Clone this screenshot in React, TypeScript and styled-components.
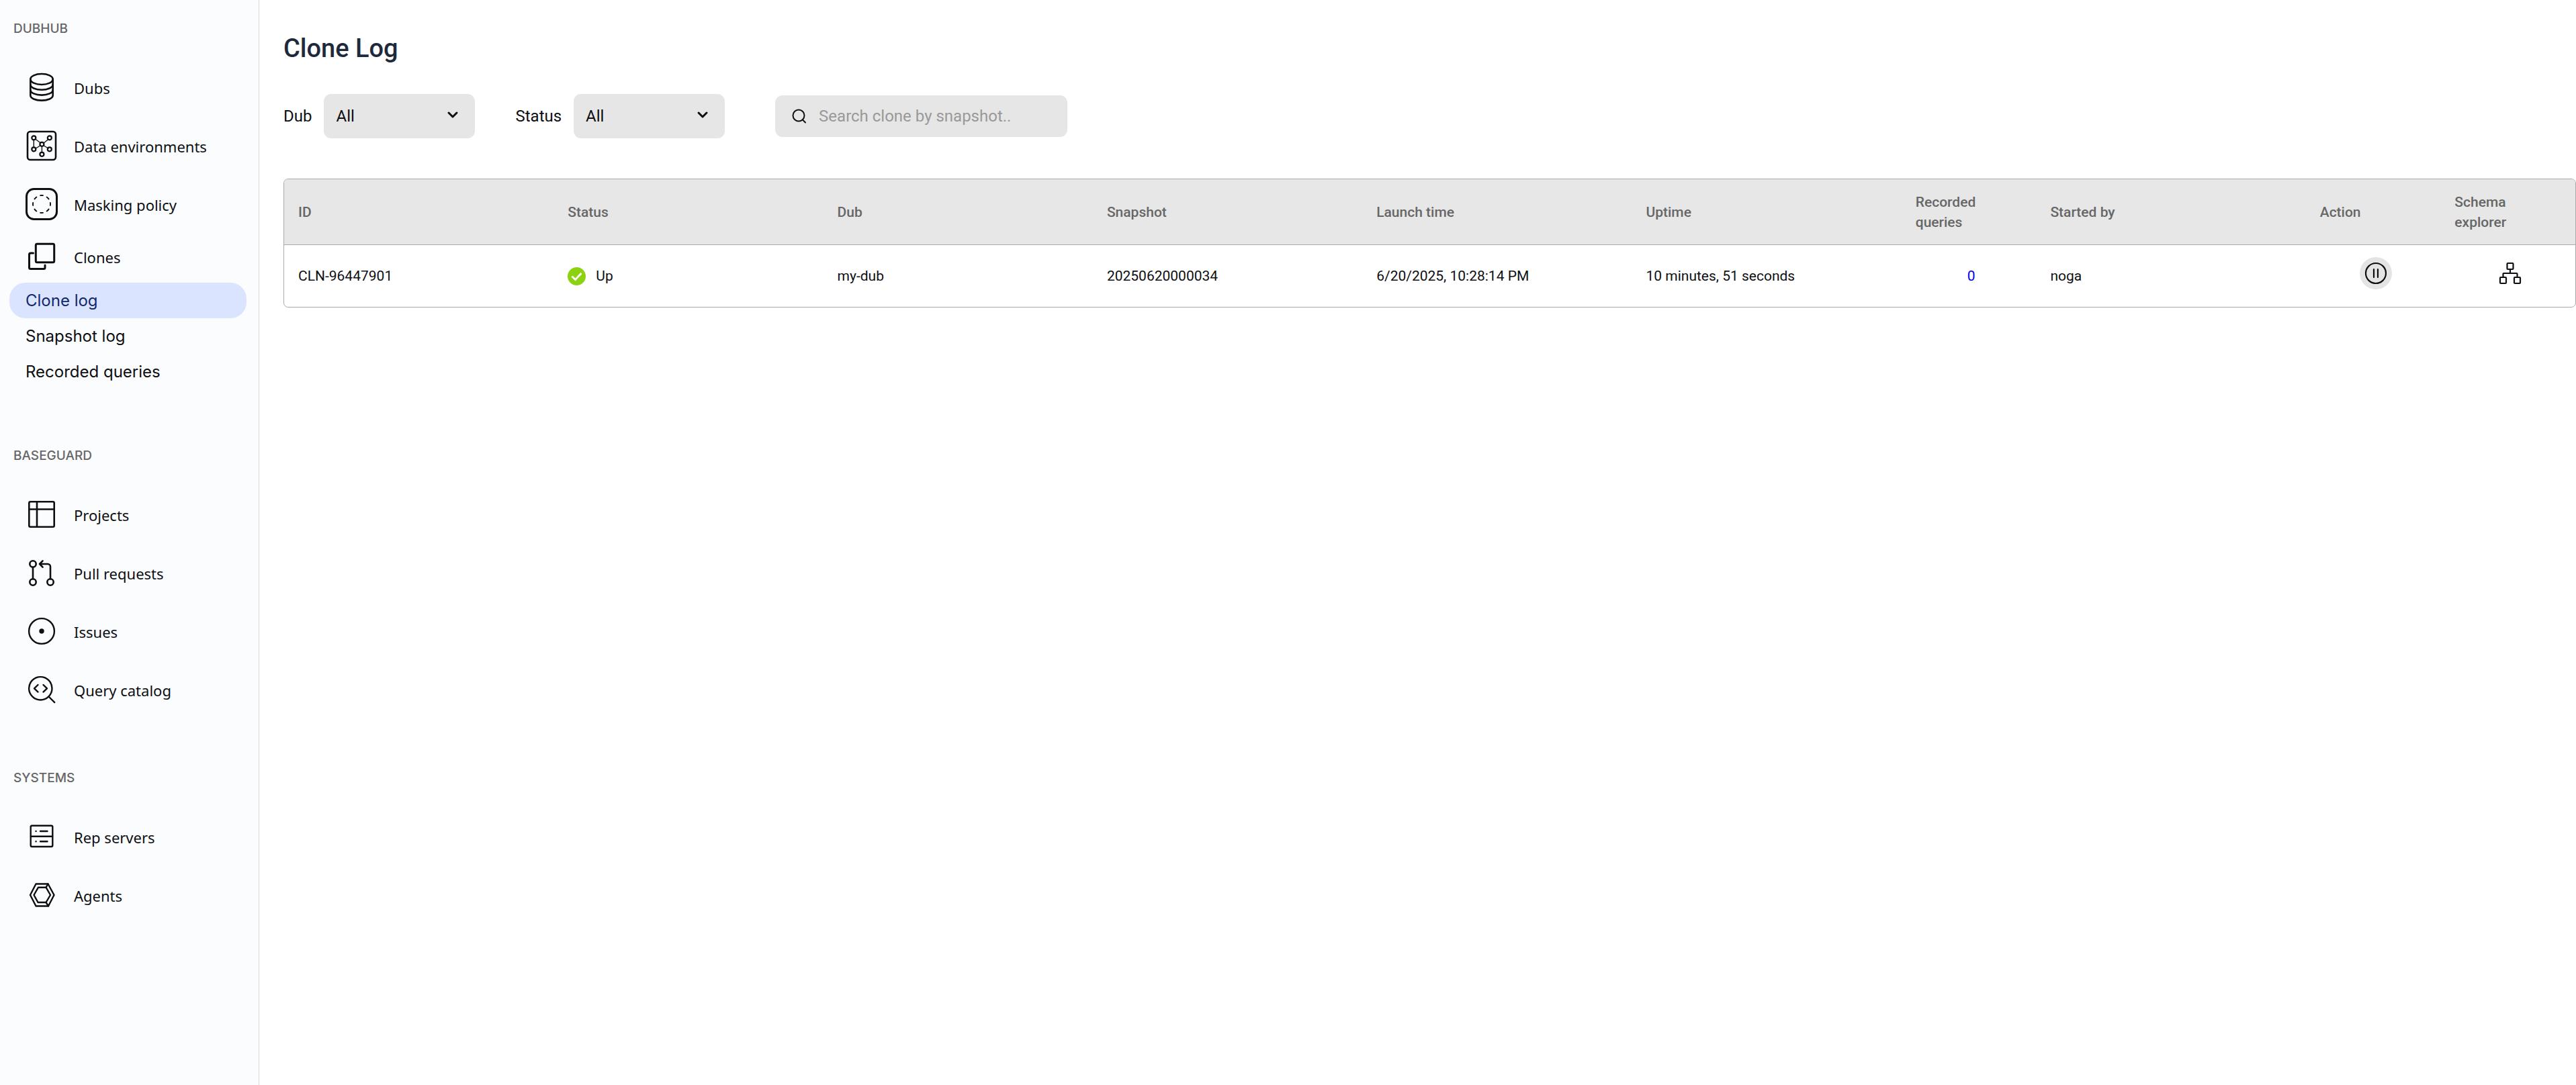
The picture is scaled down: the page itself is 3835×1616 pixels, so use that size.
import React from 'react';
import styled, { createGlobalStyle, css } from 'styled-components';

const GlobalStyle = createGlobalStyle`
  *, *::before, *::after { box-sizing: border-box; }
  body {
    margin: 0;
    background: #fff;
    color: #0d0f12;
    font-family: Roboto, "Liberation Sans", sans-serif;
    font-size: 24px;
  }
  a { color: inherit; text-decoration: none; }
`;

const Shell = styled.div`
  display: flex;
  min-height: 100vh;
`;

const Sidebar = styled.nav`
  flex: 0 0 386px;
  padding: 0 18px 0 14px;
  background: #fbfcfe;
  border-right: 1px solid #d6d7da;
`;

const Section = styled.section`
  padding-bottom: 46px;
`;

const SectionTitle = styled.h2`
  margin: 0;
  padding: 0 6px;
  font: 500 19px/86px Inter, sans-serif;
  color: #666;
`;

const List = styled.ul`
  margin: 0;
  padding: 0;
  list-style: none;
`;

const SubList = styled(List)`
  padding: 5px 0 10px;
`;

const NavLink = styled.a<{ $short?: boolean }>`
  display: flex;
  align-items: center;
  gap: 24px;
  height: ${p => (p.$short ? 69 : 87)}px;
  padding-left: 24px;
  font-family: "Noto Sans", sans-serif;
  font-size: 22px;
  svg { flex: none; }
`;

const NavLabel = styled.span`
  padding-top: 3px;
`;

const SubLink = styled.a<{ $active?: boolean }>`
  display: block;
  padding: 0 24px;
  border-radius: 24px;
  font: 400 24px/53px Inter, sans-serif;
  ${p => p.$active && css`
    background: #dbe4ff;
    color: #12296b;
  `}
`;

const Main = styled.main`
  flex: 1;
  min-width: 0;
  padding: 46px 0 0 36px;
`;

const Title = styled.h1`
  margin: 0;
  font-size: 38px;
  line-height: 52px;
  font-weight: 500;
  color: #1e293b;
`;

const Filters = styled.div`
  display: flex;
  align-items: center;
  gap: 60px;
  margin: 42px 0 60px;
`;

const Field = styled.label`
  display: flex;
  align-items: center;
  gap: 18px;
`;

const SelectBox = styled.span`
  display: grid;
  align-items: center;
  width: 225px;
  svg { grid-area: 1 / 1; justify-self: end; margin-right: 23px; pointer-events: none; }
`;

const Select = styled.select`
  grid-area: 1 / 1;
  appearance: none;
  width: 100%;
  height: 66px;
  padding: 0 18px;
  border: 0;
  border-radius: 11px;
  background: #e6e6e6;
  color: inherit;
  font: inherit;
`;

const SearchBox = styled.label`
  display: flex;
  align-items: center;
  gap: 18px;
  width: 435px;
  height: 62px;
  margin-left: 15px;
  padding: 0 25px;
  border-radius: 11px;
  background: #e6e6e6;
`;

const SearchInput = styled.input`
  flex: 1;
  min-width: 0;
  padding: 0;
  border: 0;
  outline: 0;
  background: none;
  color: inherit;
  font: inherit;
  &::placeholder { color: #999; opacity: 1; }
`;

const Table = styled.table`
  display: block;
  border: 1px solid #a9a9a9;
  border-radius: 7px;
  overflow: hidden;
  font-size: 21px;
  line-height: 30px;
  thead, tbody { display: block; }
`;

const Row = styled.tr<{ $head?: boolean }>`
  display: grid;
  grid-template-columns: repeat(6, 2fr) 1fr 2fr 1fr 1fr;
  align-items: center;
  height: ${p => (p.$head ? 98 : 92)}px;
  ${p => p.$head && css`
    background: #e7e7e7;
    border-bottom: 1px solid #a9a9a9;
  `}
`;

const HeadCell = styled.th`
  padding: 0 36px 0 21px;
  text-align: left;
  font-weight: 500;
  color: #666;
`;

const Cell = styled.td<{ $center?: boolean }>`
  display: flex;
  align-items: center;
  gap: 15px;
  justify-content: ${p => (p.$center ? 'center' : 'flex-start')};
  padding: 0 14px 0 21px;
`;

const CountLink = styled.a`
  color: #0000ee;
`;

const IconButton = styled.button<{ $filled?: boolean }>`
  display: grid;
  place-items: center;
  width: 48px;
  height: 48px;
  margin-bottom: 8px;
  padding: 0;
  border: 0;
  border-radius: 50%;
  background: ${p => (p.$filled ? '#e4e4e4' : 'none')};
  color: inherit;
`;

const Icon = ({ children, size = 48 }: { children: React.ReactNode; size?: number }) => (
  <svg width={size} height={size} viewBox={`0 0 ${size} ${size}`} fill="none" stroke="currentColor"
    strokeWidth="2.6" strokeLinecap="round" strokeLinejoin="round" aria-hidden="true">{children}</svg>
);

const DubsIcon = () => (
  <Icon>
    <ellipse cx="24" cy="12" rx="16.7" ry="8" />
    <path d="M7.3 12v24c0 4.4 7.5 7.6 16.7 7.6s16.7-3.2 16.7-7.6V12" />
    <path d="M7.3 20c0 4.2 7.5 7.8 16.7 7.8s16.7-3.6 16.7-7.8M7.3 28c0 4.2 7.5 7.6 16.7 7.6s16.7-3.4 16.7-7.6" />
  </Icon>
);
const EnvironmentsIcon = () => (
  <Icon>
    <rect x="3" y="3" width="42" height="42" rx="4" strokeWidth="2.6" />
    <g strokeWidth="1.4"><path d="M14.5 14l8 6M12.3 15v11.5M26.5 20.5l7.500-6M22.500 23.500l-8 5M26.500 23.500l7.500 4.500M24.400 25v9" /></g>
    <g strokeWidth="2.2">
      <circle cx="12.3" cy="12.3" r="3" /><circle cx="35.8" cy="12.3" r="3" /><circle cx="24.4" cy="21.8" r="3" />
      <circle cx="12.3" cy="29.3" r="3" /><circle cx="35.8" cy="29.3" r="3" /><circle cx="24.4" cy="36.8" r="3" />
    </g>
  </Icon>
);
const MaskingIcon = () => (
  <Icon>
    <rect x="1.5" y="1.5" width="45" height="45" rx="11" strokeWidth="3" />
    <circle cx="24" cy="24" r="13" strokeWidth="1.9" pathLength="80" strokeDasharray="4 6" strokeDashoffset="2" />
  </Icon>
);
const ClonesIcon = () => (
  <Icon>
    <rect x="15.3" y="5.3" width="27.4" height="27.4" rx="2" strokeWidth="3" />
    <path strokeWidth="3" d="M11.5 19h-4a2 2 0 0 0-2 2v19.5a2 2 0 0 0 2 2H27a2 2 0 0 0 2-2V37" />
  </Icon>
);
const ProjectsIcon = () => (
  <Icon>
    <rect x="5.3" y="5.3" width="37.4" height="37.4" rx="2" />
    <path d="M17 5.5v37M5.5 16.5h37" />
  </Icon>
);
const PullIcon = () => (
  <Icon>
    <circle cx="11" cy="11" r="4.7" /><circle cx="11" cy="38" r="4.7" /><circle cx="37" cy="38" r="4.7" />
    <path d="M11 15.7v17.5M37 33.2V15a4 4 0 0 0-4-4H21M25.500 6.300L21 11l4.500 4.700" />
  </Icon>
);
const IssuesIcon = () => (
  <Icon>
    <circle cx="24" cy="24" r="18.9" strokeWidth="2.4" />
    <circle cx="24" cy="24" r="3.7" fill="currentColor" stroke="none" />
  </Icon>
);
const QueryIcon = () => (
  <Icon>
    <g strokeWidth="2.4">
      <circle cx="22.3" cy="22.3" r="17.2" />
      <path d="M35 35l8.200 8.200M18.500 17l-5.500 5.300 5.500 5.300M26.500 17l5.500 5.300-5.500 5.300" />
    </g>
  </Icon>
);
const ServersIcon = () => (
  <Icon>
    <g strokeWidth="2.4">
      <rect x="7.7" y="7.8" width="32.600" height="31.200" rx="2" />
      <path d="M8 23.800h32M15.500 16h.1M22 16h10.500M15.500 31.200h.1M22 31.200h10.500" />
    </g>
  </Icon>
);
const AgentsIcon = () => (
  <Icon>
    <g strokeWidth="2.4">
      <path d="M15.500 7.500h18l9 16.500-8.500 16.500H15.500L7 24z" />
      <path d="M19 12.700h11.500L37 24l-6.500 11H18.500L12.500 24zM33.500 7.500l-3 5.200M34 40.500L30.500 35" />
    </g>
  </Icon>
);
const ChevronIcon = () => (
  <Icon size={20}><path strokeWidth="3" d="M4 5l6 6 6-6" /></Icon>
);
const SearchIcon = () => (
  <Icon size={22}><g strokeWidth="2"><circle cx="10" cy="10" r="8.500" /><path d="M16 16.500l4 4" /></g></Icon>
);
const CheckIcon = () => (
  <Icon size={27}>
    <circle cx="13.5" cy="13.5" r="13.5" fill="#8cd211" stroke="none" />
    <path stroke="#fff" strokeWidth="2.8" strokeLinecap="butt" strokeLinejoin="miter" d="M6.500 13.500l5 5L20.500 9" />
  </Icon>
);
const PauseIcon = () => (
  <Icon size={34}><g strokeWidth="2.2"><circle cx="17" cy="17" r="15" /><path d="M14 11v12M20 11v12" /></g></Icon>
);
const SchemaIcon = () => (
  <Icon size={34}>
    <g strokeWidth="2.2">
      <rect x="12.500" y="2" width="9" height="9" rx="1" /><rect x="2" y="23" width="9" height="9" rx="1" /><rect x="23" y="23" width="9" height="9" rx="1" />
      <path d="M17 11v6M6.500 23v-5a1 1 0 0 1 1-1h19a1 1 0 0 1 1 1v5" />
    </g>
  </Icon>
);

const NavItem = ({ icon, label, short }: { icon: React.ReactNode; label: string; short?: boolean }) => (
  <li><NavLink href="#" $short={short}>{icon}<NavLabel>{label}</NavLabel></NavLink></li>
);

const Filter = ({ label }: { label: string }) => (
  <Field>
    {label}
    <SelectBox><Select><option>All</option></Select><ChevronIcon /></SelectBox>
  </Field>
);

const columns = ['ID', 'Status', 'Dub', 'Snapshot', 'Launch time', 'Uptime', 'Recorded queries', 'Started by', 'Action', 'Schema explorer'];

export default function App() {
  return (
    <>
      <GlobalStyle />
      <Shell>
        <Sidebar>
          <Section>
            <SectionTitle>DUBHUB</SectionTitle>
            <List>
              <NavItem icon={<DubsIcon />} label="Dubs" />
              <NavItem icon={<EnvironmentsIcon />} label="Data environments" />
              <NavItem icon={<MaskingIcon />} label="Masking policy" />
              <NavItem icon={<ClonesIcon />} label="Clones" short />
            </List>
            <SubList>
              <li><SubLink href="#" $active>Clone log</SubLink></li>
              <li><SubLink href="#">Snapshot log</SubLink></li>
              <li><SubLink href="#">Recorded queries</SubLink></li>
            </SubList>
          </Section>
          <Section>
            <SectionTitle>BASEGUARD</SectionTitle>
            <List>
              <NavItem icon={<ProjectsIcon />} label="Projects" />
              <NavItem icon={<PullIcon />} label="Pull requests" />
              <NavItem icon={<IssuesIcon />} label="Issues" />
              <NavItem icon={<QueryIcon />} label="Query catalog" />
            </List>
          </Section>
          <Section>
            <SectionTitle>SYSTEMS</SectionTitle>
            <List>
              <NavItem icon={<ServersIcon />} label="Rep servers" />
              <NavItem icon={<AgentsIcon />} label="Agents" />
            </List>
          </Section>
        </Sidebar>
        <Main>
          <Title>Clone Log</Title>
          <Filters>
            <Filter label="Dub" />
            <Filter label="Status" />
            <SearchBox>
              <SearchIcon />
              <SearchInput type="text" aria-label="Search clone by snapshot" placeholder="Search clone by snapshot.." />
            </SearchBox>
          </Filters>
          <Table>
            <thead>
              <Row $head>{columns.map(name => <HeadCell key={name} scope="col">{name}</HeadCell>)}</Row>
            </thead>
            <tbody>
              <Row>
                <Cell>CLN-96447901</Cell>
                <Cell><CheckIcon />Up</Cell>
                <Cell>my-dub</Cell>
                <Cell>20250620000034</Cell>
                <Cell>6/20/2025, 10:28:14 PM</Cell>
                <Cell>10 minutes, 51 seconds</Cell>
                <Cell $center><CountLink href="#">0</CountLink></Cell>
                <Cell>noga</Cell>
                <Cell $center><IconButton type="button" aria-label="Pause clone" $filled><PauseIcon /></IconButton></Cell>
                <Cell $center><IconButton type="button" aria-label="Open schema explorer"><SchemaIcon /></IconButton></Cell>
              </Row>
            </tbody>
          </Table>
        </Main>
      </Shell>
    </>
  );
}
